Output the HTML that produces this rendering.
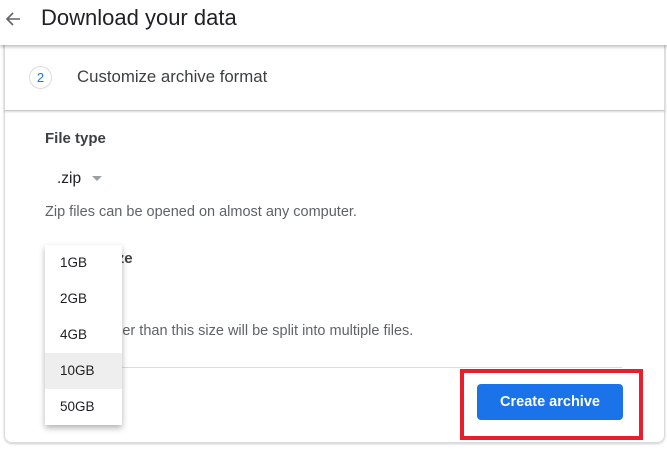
<!DOCTYPE html>
<html><head><meta charset="utf-8"><style>
*{box-sizing:border-box;margin:0;padding:0}
body{width:667px;height:450px;overflow:hidden;background:#fff;font-family:"Liberation Sans",Arial,sans-serif;position:relative;color:#3c4043}
.abs{position:absolute;white-space:nowrap}
</style></head><body>
<div class="abs" style="left:0;top:0;width:667px;height:45px;background:#fff;box-shadow:0 2px 3px rgba(0,0,0,.25);z-index:3"></div>
<svg class="abs" style="left:4px;top:10px;z-index:4" width="18" height="18" viewBox="0 0 18 18"><path d="M16 9H3M9 3L3 9l6 6" stroke="#5f6368" stroke-width="1.6" fill="none"/></svg>
<div class="abs" style="left:41px;top:5px;font-size:22px;color:#202124;z-index:4">Download your data</div>
<div class="abs" style="left:4px;top:30px;width:661px;height:413px;border:1px solid #dadce0;border-top:none;border-radius:0 0 8px 8px;box-shadow:0 1px 2px rgba(0,0,0,.2)"></div>
<div class="abs" style="left:4px;top:44px;width:661px;height:67px;border:1px solid #dadce0;border-bottom:1px solid #c8c8c8;box-shadow:0 1px 2px rgba(0,0,0,.15)"></div>
<div class="abs" style="left:29px;top:66px;width:23px;height:23px;border:1px solid #dadce0;border-radius:50%;color:#1a73e8;font-size:13px;text-align:center;line-height:21px">2</div>
<div class="abs" style="left:77px;top:67px;font-size:16.8px;color:#3c4043">Customize archive format</div>
<div class="abs" style="left:45px;top:130px;font-size:15px;font-weight:bold;color:#3c4043">File type</div>
<div class="abs" style="left:57px;top:170px;font-size:15.5px;color:#202124">.zip</div>
<svg class="abs" style="left:91px;top:175px" width="12" height="7"><path d="M1 1h10L6 6z" fill="#9aa0a6"/></svg>
<div class="abs" style="left:45px;top:204px;font-size:14.5px;color:#5f6368">Zip files can be opened on almost any computer.</div>
<div class="abs" style="left:45px;top:250px;font-size:15px;font-weight:bold;color:#3c4043">Archive size</div>
<div class="abs" style="left:45px;top:323px;font-size:14.5px;color:#5f6368">Exports larger than this size will be split into multiple files.</div>
<div class="abs" style="left:45px;top:367px;width:577px;height:1px;background:#dadce0"></div>
<div class="abs" style="left:477px;top:384px;width:146px;height:36px;background:#1a73e8;border-radius:4px;color:#fff;font-size:14.5px;font-weight:bold;text-align:center;line-height:36px">Create archive</div>
<div class="abs" style="left:460px;top:369px;width:183px;height:71px;border:4px solid #e81f2a"></div>
<div class="abs" style="left:45px;top:245px;width:77px;height:180px;background:#fff;box-shadow:0 3px 6px rgba(0,0,0,.3);z-index:5;font-size:13.5px;color:#202124">
<div style="height:36px;line-height:36px;padding-left:15px">1GB</div>
<div style="height:36px;line-height:36px;padding-left:15px">2GB</div>
<div style="height:36px;line-height:36px;padding-left:15px">4GB</div>
<div style="height:36px;line-height:36px;padding-left:15px;background:#eeeeee">10GB</div>
<div style="height:36px;line-height:36px;padding-left:15px">50GB</div>
</div>
</body></html>
